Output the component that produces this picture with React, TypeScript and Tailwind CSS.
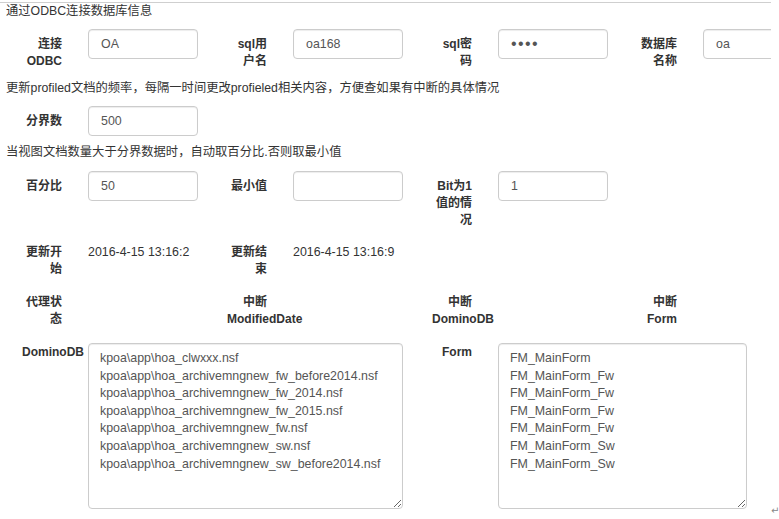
import type { ReactNode } from "react";

const domino = [
  "kpoa\\app\\hoa_clwxxx.nsf",
  "kpoa\\app\\hoa_archivemngnew_fw_before2014.nsf",
  "kpoa\\app\\hoa_archivemngnew_fw_2014.nsf",
  "kpoa\\app\\hoa_archivemngnew_fw_2015.nsf",
  "kpoa\\app\\hoa_archivemngnew_fw.nsf",
  "kpoa\\app\\hoa_archivemngnew_sw.nsf",
  "kpoa\\app\\hoa_archivemngnew_sw_before2014.nsf",
];

const forms = [
  "FM_MainForm",
  "FM_MainForm_Fw",
  "FM_MainForm_Fw",
  "FM_MainForm_Fw",
  "FM_MainForm_Fw",
  "FM_MainForm_Sw",
  "FM_MainForm_Sw",
];

function Label({ children, top = true }: { children: ReactNode; top?: boolean }) {
  return (
    <div
      className={[
        "w-[88px] shrink-0 pl-[22px] pr-[26px] text-right text-[12px] font-bold leading-[17px] text-[#333]",
        top ? "pt-[7px]" : "pt-[1px]",
      ].join(" ")}
    >
      {children}
    </div>
  );
}

function Box({ children }: { children?: ReactNode }) {
  return (
    <div className="flex h-[30px] w-[110px] shrink-0 items-center rounded-[4px] border border-[#ccc] bg-white px-[12px] text-[12.4px] text-[#555] shadow-[inset_0_1px_1px_rgba(0,0,0,0.075)]">
      {children}
    </div>
  );
}

function Field({ label, children }: { label: string; children?: ReactNode }) {
  return (
    <div className="mr-[7px] flex w-[198px] shrink-0">
      <Label>{label}</Label>
      <Box>{children}</Box>
    </div>
  );
}

function Static({ label, value }: { label: string; value?: string }) {
  return (
    <div className="mr-[7px] flex w-[198px] shrink-0">
      <Label>{label}</Label>
      <div className="w-[110px] shrink-0 pt-[7px] text-[12.4px] leading-[17px] text-[#333]">{value}</div>
    </div>
  );
}

export default function App() {
  return (
    <div className="flex min-h-screen items-start bg-white font-['Liberation_Sans','Noto_Sans_CJK_SC',sans-serif] text-[12px] text-[#333]">
      <div className="flex items-end">
        <div className="mt-[2px] w-[771px] overflow-hidden border-t border-[#cfcfcf] pb-[3px]">
          <p className="pl-[6px] text-[12.3px] leading-[17px]">通过ODBC连接数据库信息</p>

          <div className="mt-[9px] flex">
            <Field label="连接ODBC">OA</Field>
            <Field label="sql用户名">oa168</Field>
            <Field label="sql密码">
              <span className="text-[16px] tracking-[1.4px] text-[#555]">••••</span>
            </Field>
            <Field label="数据库名称">oa</Field>
          </div>

          <p className="mt-[10px] pl-[6px] text-[12.3px] leading-[17px]">
            更新profiled文档的频率，每隔一时间更改profieled相关内容，方便查如果有中断的具体情况
          </p>

          <div className="mt-[9px] flex">
            <Field label="分界数">500</Field>
          </div>

          <p className="mt-[8px] pl-[6px] text-[12.3px] leading-[17px]">
            当视图文档数量大于分界数据时，自动取百分比.否则取最小值
          </p>

          <div className="mt-[10px] flex">
            <Field label="百分比">50</Field>
            <Field label="最小值" />
            <Field label="Bit为1值的情况">1</Field>
          </div>

          <div className="mt-[8px] flex">
            <Static label="更新开始" value="2016-4-15 13:16:2" />
            <Static label="更新结束" value="2016-4-15 13:16:9" />
          </div>

          <div className="mt-[9px] flex">
            <Static label="代理状态" />
            <Static label="中断ModifiedDate" />
            <Static label="中断DominoDB" />
            <Static label="中断Form" />
          </div>

          <div className="mt-[15px] flex">
            <Label top={false}>DominoDB</Label>
            <textarea
              readOnly
              value={domino.join("\n")}
              className="mr-[7px] h-[166px] w-[315px] shrink-0 rounded-[4px] border border-[#ccc] px-[11px] pt-[6px] text-[12.4px] leading-[17.6px] text-[#555] shadow-[inset_0_1px_1px_rgba(0,0,0,0.075)] outline-none"
            />
            <Label top={false}>Form</Label>
            <textarea
              readOnly
              value={forms.join("\n")}
              className="h-[166px] w-[249px] shrink-0 rounded-[4px] border border-[#ccc] px-[11px] pt-[6px] text-[12.4px] leading-[17.6px] text-[#555] shadow-[inset_0_1px_1px_rgba(0,0,0,0.075)] outline-none"
            />
          </div>
        </div>
        <span className="mb-[-5px] font-['DejaVu_Sans',sans-serif] text-[10px] leading-[12px] text-[#888]">↵</span>
      </div>
    </div>
  );
}
